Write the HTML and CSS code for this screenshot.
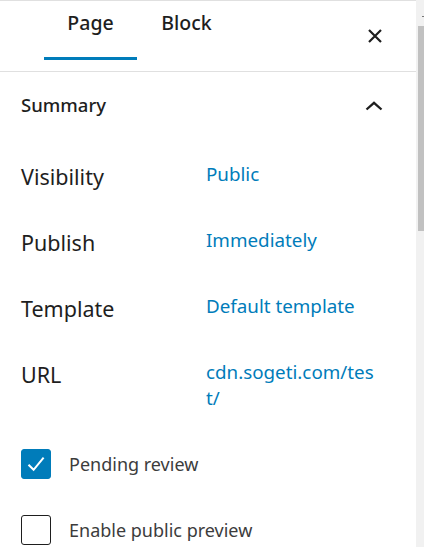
FILE: index.html
```html
<!DOCTYPE html>
<html lang="en">
<head>
<meta charset="utf-8">
<title>Page settings</title>
<link rel="stylesheet" href="styles.css">
</head>
<body>
<div class="app">
  <div class="panel">
    <header class="head">
      <div class="tabs">
        <button class="tab active"><span>Page</span></button>
        <button class="tab"><span>Block</span></button>
      </div>
      <button class="close" aria-label="Close settings">
        <svg width="14" height="14" viewBox="0 0 14 14"><path d="M1 1L13 13M13 1L1 13" stroke="#1e1e1e" stroke-width="2.2" fill="none"/></svg>
      </button>
    </header>
    <section class="summary">
      <div class="summary-head">
        <h2 class="summary-title">Summary</h2>
        <svg class="chev" width="18" height="10" viewBox="0 0 18 10"><path d="M1.5 8.5L9 1.8L16.5 8.5" stroke="#1e1e1e" stroke-width="2.3" fill="none"/></svg>
      </div>
      <div class="rows">
        <div class="row"><span class="label">Visibility</span><a class="value">Public</a></div>
        <div class="row"><span class="label">Publish</span><a class="value">Immediately</a></div>
        <div class="row"><span class="label">Template</span><a class="value">Default template</a></div>
        <div class="row"><span class="label">URL</span><a class="value url">cdn.sogeti.com/tes<wbr>t/</a></div>
      </div>
      <div class="checks">
        <label class="check">
          <span class="box on"><svg width="30" height="30" viewBox="0 0 30 30"><path d="M7.5 15.8L12.6 20.8L22.6 8.6" stroke="#fff" stroke-width="2" fill="none"/></svg></span>
          <span class="check-text">Pending review</span>
        </label>
        <label class="check">
          <span class="box"></span>
          <span class="check-text">Enable public preview</span>
        </label>
      </div>
    </section>
  </div>
  <div class="scrollbar">
    <div class="arrow"></div>
    <div class="thumb"></div>
  </div>
</div>
</body>
</html>
```
FILE: styles.css
```css
* { box-sizing: border-box; }
html, body { margin: 0; padding: 0; background: #fff; }
body {
  font-family: "Noto Sans", "Open Sans", sans-serif;
  color: #1e1e1e;
}
.app {
  display: flex;
  height: 547px;
  overflow: hidden;
}
.panel {
  flex: 1;
  border-top: 1px solid #e0e0e0;
}
.head {
  display: flex;
  height: 71px;
  border-bottom: 1px solid #e0e0e0;
  padding-left: 44px;
  padding-right: 23px;
}
.tabs {
  display: flex;
  gap: 3px;
  height: 59px;
}
.tab {
  width: 93px;
  height: 59px;
  border: 0;
  border-bottom: 3px solid transparent;
  background: none;
  font-family: inherit;
  font-size: 19.5px;
  font-weight: 500;
  line-height: 26px;
  color: #1e1e1e;
  padding: 9px 0 0;
  display: flex;
  align-items: flex-start;
  justify-content: center;
}
.tab.active { border-bottom-color: #007cba; }
.close {
  margin-left: auto;
  margin-top: 17px;
  width: 36px;
  height: 36px;
  border: 0;
  background: none;
  padding: 0;
  display: flex;
  align-items: center;
  justify-content: center;
}
.summary { padding: 0 0 0 21px; }
.summary-head {
  display: flex;
  align-items: flex-start;
  padding-top: 20px;
  padding-right: 33px;
}
.summary-title {
  margin: 0;
  font-size: 18.5px;
  font-weight: 500;
  line-height: 26px;
}
.chev { margin-left: auto; margin-top: 9px; }
.rows {
  display: flex;
  flex-direction: column;
  gap: 40px;
  padding-top: 46px;
}
.row {
  display: flex;
  align-items: flex-start;
}
.label {
  width: 185px;
  font-size: 21.5px;
  line-height: 26px;
}
.value {
  width: 176px;
  margin-top: -3px;
  font-size: 18.8px;
  line-height: 26px;
  color: #007cba;
  overflow-wrap: anywhere;
}
.checks {
  display: flex;
  flex-direction: column;
  gap: 36px;
  margin-top: 38px;
}
.check {
  display: flex;
  align-items: flex-start;
  gap: 18px;
  height: 30px;
}
.box {
  width: 30px;
  height: 30px;
  border: 1.5px solid #1e1e1e;
  border-radius: 3px;
  background: #fff;
  display: block;
}
.box.on { background: #007cba; border-color: #007cba; }
.box.on svg { display: block; margin: -1.5px; }
.check-text {
  font-size: 18px;
  line-height: 31px;
  color: #3c3c3c;
}
.scrollbar {
  width: 8px;
  background: #f1f1f1;
  display: flex;
  flex-direction: column;
}
.arrow {
  height: 26px;
  position: relative;
}
.arrow::after {
  content: "";
  position: absolute;
  right: 0;
  top: 16px;
  width: 2px;
  height: 1px;
  background: #777;
}
.thumb {
  width: 6px;
  margin-left: 2px;
  height: 205px;
  background: #c1c1c1;
}
```
